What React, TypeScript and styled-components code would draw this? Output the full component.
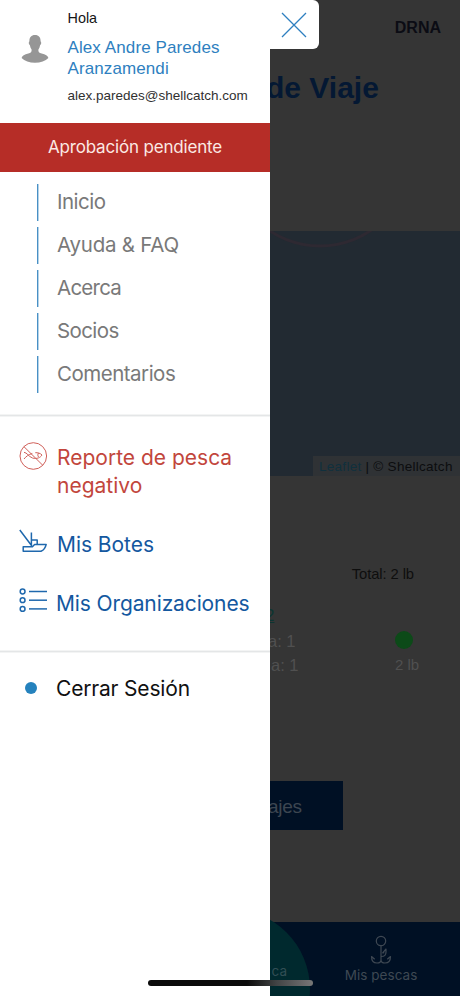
import React from "react";
import styled, { createGlobalStyle } from "styled-components";

const GlobalStyle = createGlobalStyle`
  * { box-sizing: border-box; }
  body { margin: 0; background: #353535; }
`;

const sans = `"Liberation Sans", Arial, sans-serif`;
const ui = `Inter, "Liberation Sans", sans-serif`;

const Screen = styled.div`
  position: relative;
  width: 460px;
  height: 996px;
  overflow: hidden;
  background: #353535;
`;

const Page = styled.main`
  width: 190px;
  height: 996px;
  margin-left: 270px;
  display: flex;
  flex-direction: column;
  font-family: ${sans};
`;

const PageHeader = styled.header`
  height: 231px;
  flex: none;
  display: flex;
  flex-direction: column;
`;

const Agency = styled.div`
  align-self: flex-end;
  margin: 18px 19px 0 0;
  font: bold 16px/19px ${sans};
  color: #0b0c14;
`;

const PageTitle = styled.h1`
  margin: 33px 0 0 -4px;
  font: bold 30px/36px ${sans};
  white-space: nowrap;
  color: #041833;
`;

const Map = styled.section`
  height: 245px;
  flex: none;
  display: flex;
  flex-direction: column;
  justify-content: space-between;
  background: #222a32;
`;

const Attribution = styled.div`
  align-self: flex-end;
  width: 147px;
  height: 20px;
  padding-left: 6px;
  background: #2f3235;
  font: 13.5px/21px ${sans};
  letter-spacing: 0.28px;
  white-space: nowrap;
  color: #0c0d0f;
  span { color: #10303d; }
`;

const Total = styled.div`
  margin: 88px 46px 0 0;
  text-align: right;
  font: 14.8px/20px ${sans};
  letter-spacing: -0.1px;
  color: #0e0e0e;
`;

const Catch = styled.section`
  height: 70px;
  margin-top: 22px;
  display: flex;
  justify-content: space-between;
`;

const CatchInfo = styled.div`
  width: 80px;
  display: flex;
  flex-direction: column;
`;

const CatchCode = styled.div`
  margin-left: -5px;
  margin-bottom: 3px;
  font: 17px/20px ${sans};
  text-decoration: underline;
  color: #0c3532;
`;

const CatchLine = styled.div<{ $shift: number }>`
  margin-left: ${(p) => p.$shift}px;
  font: 16.5px/24px ${sans};
  color: #505050;
`;

const CatchWeight = styled.div`
  width: 50px;
  margin-right: 31px;
  padding-top: 25px;
  display: flex;
  flex-direction: column;
  align-items: center;
  font: 15px/20px ${sans};
  color: #505050;
`;

const Dot = styled.i<{ $size: number; $color: string }>`
  display: block;
  flex: none;
  width: ${(p) => p.$size}px;
  height: ${(p) => p.$size}px;
  border-radius: 50%;
  background: ${(p) => p.$color};
`;

const WeightText = styled.span`
  margin: 6px 0 0 6px;
`;

const TripsButton = styled.button`
  width: 73px;
  height: 49px;
  margin-top: 105px;
  padding: 0;
  border: 0;
  background: #001024;
  text-align: left;
  text-indent: -2px;
  font: 19px/51px ${sans};
  letter-spacing: -0.3px;
  color: #3d4651;
`;

const TabBar = styled.nav`
  height: 74px;
  flex: none;
  margin-top: auto;
  display: flex;
  justify-content: flex-end;
  background: #001024;
`;

const Tab = styled.div`
  width: 158px;
  padding-top: 13px;
  display: flex;
  flex-direction: column;
  align-items: center;
  font: 13.5px/20px ${ui};
  letter-spacing: 0.05px;
  color: #3e4853;
`;

const TealTab = styled.div`
  position: absolute;
  left: 150px;
  top: 909px;
  width: 160px;
  height: 160px;
  border-radius: 50%;
  background: #00292e;
  padding: 52px 23px 0 0;
  text-align: right;
  font: 13.5px/20px ${ui};
  color: #324e54;
`;

const Drawer = styled.aside`
  position: absolute;
  inset: 0 auto 0 0;
  width: 270px;
  background: #fff;
  font-family: ${ui};
`;

const CloseButton = styled.button`
  position: absolute;
  left: 269px;
  top: 0;
  width: 50px;
  height: 49px;
  padding: 0;
  border: 0;
  border-radius: 0 6px 6px 0;
  background: #fff;
  display: grid;
  place-items: center;
`;

const Profile = styled.header`
  height: 123px;
  padding: 9px 0 0 21px;
  display: flex;
  font-family: ${sans};
`;

const AvatarBox = styled.div`
  width: 46.5px;
  flex: none;
  padding-top: 25px;
`;

const Greeting = styled.div`
  font-size: 14.4px;
  line-height: 18px;
  color: #151515;
`;

const Name = styled.div`
  margin-top: 10px;
  font-size: 17px;
  line-height: 21px;
  letter-spacing: 0.1px;
  white-space: nowrap;
  color: #2e7fc0;
`;

const Email = styled.div`
  margin-top: 9px;
  font-size: 13.5px;
  line-height: 16px;
  white-space: nowrap;
  color: #303030;
`;

const Banner = styled.div`
  height: 49px;
  background: #b62d27;
  text-align: center;
  font-size: 17px;
  line-height: 48px;
  letter-spacing: -0.18px;
  color: #fbe9e4;
`;

const Menu = styled.nav`
  height: 242px;
  padding: 12px 0 0 37px;
  display: flex;
  flex-direction: column;
  gap: 6px;
`;

const MenuItem = styled.a<{ $spacing: number }>`
  height: 37px;
  padding-left: 20px;
  background: linear-gradient(90deg, #4990c5 1px, #b5d3e8 1px 2px, transparent 2px);
  font-size: 20.5px;
  line-height: 35px;
  letter-spacing: ${(p) => p.$spacing}px;
  color: #797979;
`;

const Divider = styled.hr`
  height: 3px;
  margin: 0;
  border: 0;
  background: linear-gradient(#f3f4f4 1px, #e4e6e7 1px 2px, #f3f4f4 2px);
`;

const Actions = styled.nav`
  height: 233px;
  padding: 27px 0 0 19px;
  display: flex;
  flex-direction: column;
`;

const Action = styled.a<{ $color: string; $gap: number; $spacing: number }>`
  margin-bottom: 30.5px;
  display: flex;
  align-items: flex-start;
  gap: ${(p) => p.$gap}px;
  font-size: 21px;
  line-height: 28.4px;
  letter-spacing: ${(p) => p.$spacing}px;
  white-space: nowrap;
  color: ${(p) => p.$color};
  svg { flex: none; margin-top: -2px; }
`;

const SignOut = styled.a`
  padding: 19px 0 0 25px;
  display: flex;
  align-items: center;
  gap: 19px;
  font-size: 21px;
  line-height: 34px;
  letter-spacing: -0.18px;
  color: #111;
  i { margin-top: -3px; }
`;

const HomeIndicator = styled.div`
  position: absolute;
  left: 148px;
  top: 980px;
  width: 165px;
  height: 6px;
  border-radius: 3px;
  background: linear-gradient(90deg, #0b0b0b 0 60%, #424445 78%, #777 100%);
`;

const menu: [string, number][] = [
  ["Inicio", -0.5],
  ["Ayuda & FAQ", -0.25],
  ["Acerca", -0.75],
  ["Socios", -0.6],
  ["Comentarios", -0.5],
];

const Avatar = () => (
  <svg width="28" height="29" viewBox="0 0 28 29" fill="#969696">
    <path d="M14 1c-3.800 0-5.600 2.400-5.600 6 0 1-.8 1-.6 2.300.2 1.200.6 1.500 1.100 1.900.3 1.800.9 3.200 1.700 4.300.3 2.400-.7 3.300-3.300 4.100C3.600 20.700 1 22 .6 24 3.500 27.200 8.500 28.700 14 28.700s10.500-1.500 13.400-4.700c-.4-2-3-3.300-6.700-4.400-2.600-.8-3.600-1.700-3.300-4.100.8-1.100 1.400-2.500 1.700-4.300.5-.4.9-.7 1.100-1.900.2-1.300-.6-1.300-.6-2.300 0-3.600-1.800-6-5.600-6z" />
  </svg>
);

const NoFish = () => (
  <svg width="28" height="30" viewBox="0 0 28 30" fill="none" stroke="#d0605a" strokeWidth="1">
    <circle cx="14.300" cy="14" r="13.300" />
    <path d="M4.800 4.500 24 23.500M5 10.300c3 .2 4.500 4.300 8.500 5.700 4.500 1.300 8-.5 9.500-3-1.700-1.800-4.200-2.500-6.700-2.300M5 17c2-2.400 4.500-4.600 8.300-5.500M19.500 11c-1 1.500-.8 3 .2 4" />
  </svg>
);

const Boat = () => (
  <svg width="28" height="29" viewBox="0 0 28 29" fill="none" stroke="#1f68ad" strokeWidth="1.500" strokeLinejoin="round">
    <path d="M.8 1 12.700 16.800M12.400 3.500v13.700M12.400 10.900h5.800v4.500M4.200 22.300v-4.600h9.200l2.200-2.300h11.600c-.7 3.200-2.400 5.700-5.200 6.900z" />
  </svg>
);

const Orgs = () => (
  <svg width="28" height="29" viewBox="0 0 28 29" fill="none" stroke="#1f68ad" strokeWidth="1.500">
    {[3.5, 12.2, 20.9].map((y) => (
      <React.Fragment key={y}>
        <circle cx="3.600" cy={y} r="2.400" />
        <path d={`M10 ${y}H28`} />
      </React.Fragment>
    ))}
  </svg>
);

const Hook = () => (
  <svg width="22" height="30" viewBox="0 0 22 30" fill="none" stroke="#3e4853" strokeWidth="1.200" strokeLinejoin="round">
    <circle cx="11" cy="6" r="4.700" />
    <path d="M11 10.700v14c0 3-2 3.300-4 3.300-3.500 0-5.500-2-5.500-6.500l3.200 2.800M11 24.700c0 3 2 3.300 4 3.300 3.500 0 5.500-2 5.500-6.500l-3.200 2.800M11.500 21.500c3 0 4.500-1.800 4.500-4.500v-3l-3.300 3.800 1.600-.2" />
  </svg>
);

export default function App() {
  return (
    <Screen>
      <GlobalStyle />
      <Page>
        <PageHeader>
          <Agency>DRNA</Agency>
          <PageTitle>de Viaje</PageTitle>
        </PageHeader>
        <Map>
          <svg width="190" height="20" fill="none" stroke="#2e2932" strokeWidth="3">
            <circle cx="50" cy="-76" r="91" />
          </svg>
          <Attribution><span>Leaflet</span> | © Shellcatch</Attribution>
        </Map>
        <Total>Total: 2 lb</Total>
        <Catch>
          <CatchInfo>
            <CatchCode>2</CatchCode>
            <CatchLine $shift={-2}>a: 1</CatchLine>
            <CatchLine $shift={1}>a: 1</CatchLine>
          </CatchInfo>
          <CatchWeight>
            <Dot $size={18} $color="#0c4a18" />
            <WeightText>2 lb</WeightText>
          </CatchWeight>
        </Catch>
        <TripsButton>ajes</TripsButton>
        <TabBar>
          <Tab><Hook />Mis pescas</Tab>
        </TabBar>
      </Page>
      <TealTab>ca</TealTab>
      <Drawer>
        <Profile>
          <AvatarBox><Avatar /></AvatarBox>
          <div>
            <Greeting>Hola</Greeting>
            <Name>Alex Andre Paredes<br />Aranzamendi</Name>
            <Email>alex.paredes@shellcatch.com</Email>
          </div>
        </Profile>
        <Banner>Aprobación pendiente</Banner>
        <Menu>
          {menu.map(([label, spacing]) => (
            <MenuItem key={label} $spacing={spacing}>{label}</MenuItem>
          ))}
        </Menu>
        <Divider />
        <Actions>
          <Action $color="#c2463c" $gap={10} $spacing={0}><NoFish /><span>Reporte de pesca<br />negativo</span></Action>
          <Action $color="#14589f" $gap={10} $spacing={-0.05}><Boat />Mis Botes</Action>
          <Action $color="#14589f" $gap={9} $spacing={-0.12}><Orgs />Mis Organizaciones</Action>
        </Actions>
        <Divider />
        <SignOut><Dot $size={12} $color="#2582bd" />Cerrar Sesión</SignOut>
      </Drawer>
      <CloseButton aria-label="Cerrar">
        <svg width="26" height="26" fill="none" stroke="#2e7fc0" strokeWidth="1.300">
          <path d="M1 1 25 25M25 1 1 25" />
        </svg>
      </CloseButton>
      <HomeIndicator />
    </Screen>
  );
}
